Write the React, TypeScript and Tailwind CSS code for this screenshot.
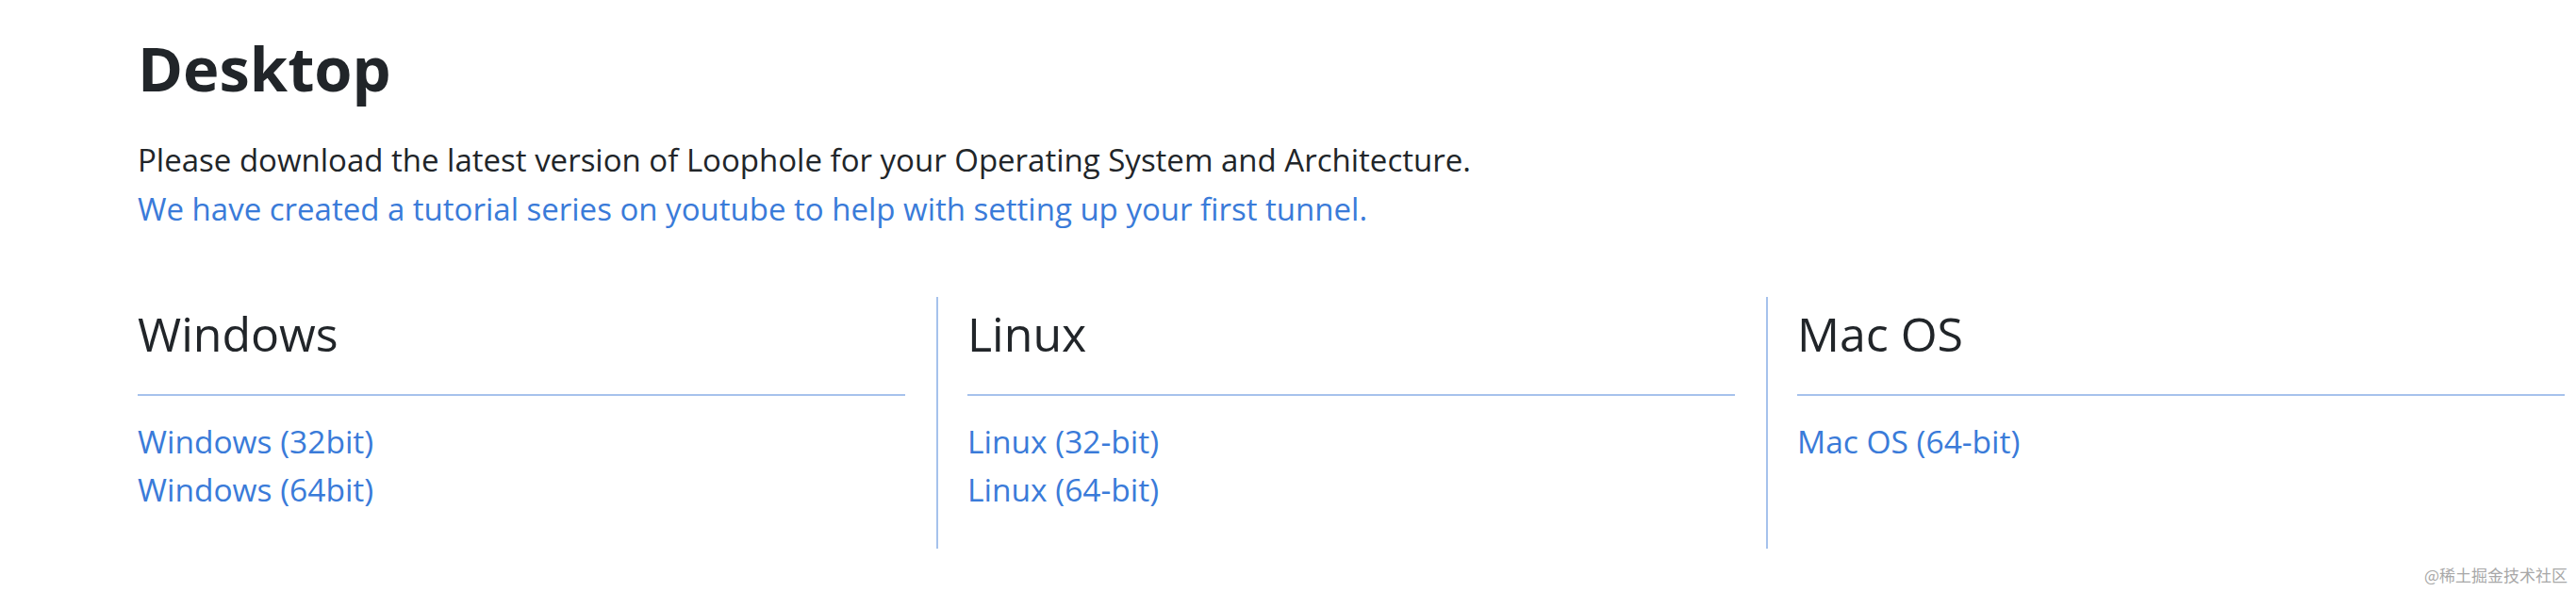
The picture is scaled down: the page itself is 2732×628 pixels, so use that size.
import React from "react";

const cols = [
  { title: "Windows", links: ["Windows (32bit)", "Windows (64bit)"] },
  { title: "Linux", links: ["Linux (32-bit)", "Linux (64-bit)"] },
  { title: "Mac OS", links: ["Mac OS (64-bit)"] },
];

export default function App() {
  return (
    <div
      className="relative w-[2732px] h-[628px] overflow-hidden bg-white text-[#212529]"
      style={{ fontFamily: '"Open Sans", "Noto Sans", "Liberation Sans", sans-serif' }}
    >
      <div className="pl-[146px] pt-[40px]">
        <h1 className="text-[65px] leading-[64px] font-bold">Desktop</h1>
        <div className="mt-[40px] text-[33px] leading-[52px]">
          <p>Please download the latest version of Loophole for your Operating System and Architecture.</p>
          <p>
            <a className="text-[#3a7bd9]" href="#">
              We have created a tutorial series on youtube to help with setting up your first tunnel.
            </a>
          </p>
        </div>
        <div className="mt-[67px] flex">
          {cols.map((c, i) => (
            <div
              key={c.title}
              className={
                i === 0
                  ? "w-[847px] shrink-0 pr-[33px] pt-[9px] pb-[37px]"
                  : "w-[880px] shrink-0 border-l-2 border-[#a6c2ec] pl-[31px] pr-[33px] pt-[9px] pb-[37px]"
              }
            >
              <h2 className="text-[50px] leading-[60px] font-normal">{c.title}</h2>
              <div className="mt-[34px] h-[2px] bg-[#a6c2ec]" />
              <div className="mt-[23px] flex flex-col text-[33.5px] leading-[51px]">
                {c.links.map((l) => (
                  <a key={l} href="#" className="text-[#3a7bd9]">
                    {l}
                  </a>
                ))}
                {c.links.length === 1 && <span className="invisible">&nbsp;</span>}
              </div>
            </div>
          ))}
        </div>
      </div>
      <div
        className="absolute right-[9px] bottom-[6px] text-[17px] leading-[24px] text-[#a8a8a8]"
        style={{ fontFamily: '"Noto Sans CJK SC", "Noto Sans", sans-serif' }}
      >
        @稀土掘金技术社区
      </div>
    </div>
  );
}
